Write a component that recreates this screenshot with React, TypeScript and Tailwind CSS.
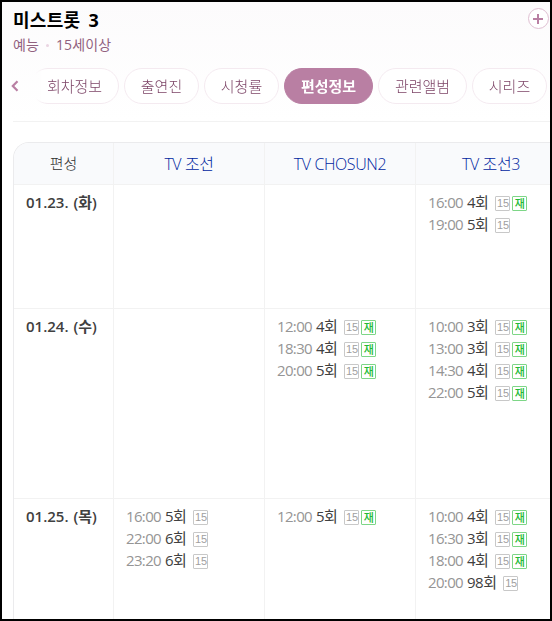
type Airing = { time: string; episode: string; rerun?: boolean }

const tabs = ["회차정보", "출연진", "시청률", "편성정보", "관련앨범", "시리즈"]

const channels = ["TV 조선", "TV CHOSUN2", "TV 조선3"]

const days: { date: string; height: string; cells: Airing[][] }[] = [
  {
    date: "01.23. (화)",
    height: "h-[124px]",
    cells: [
      [],
      [],
      [
        { time: "16:00", episode: "4회", rerun: true },
        { time: "19:00", episode: "5회" },
      ],
    ],
  },
  {
    date: "01.24. (수)",
    height: "h-[190px]",
    cells: [
      [],
      [
        { time: "12:00", episode: "4회", rerun: true },
        { time: "18:30", episode: "4회", rerun: true },
        { time: "20:00", episode: "5회", rerun: true },
      ],
      [
        { time: "10:00", episode: "3회", rerun: true },
        { time: "13:00", episode: "3회", rerun: true },
        { time: "14:30", episode: "4회", rerun: true },
        { time: "22:00", episode: "5회", rerun: true },
      ],
    ],
  },
  {
    date: "01.25. (목)",
    height: "h-[190px]",
    cells: [
      [
        { time: "16:00", episode: "5회" },
        { time: "22:00", episode: "6회" },
        { time: "23:20", episode: "6회" },
      ],
      [{ time: "12:00", episode: "5회", rerun: true }],
      [
        { time: "10:00", episode: "4회", rerun: true },
        { time: "16:30", episode: "3회", rerun: true },
        { time: "18:00", episode: "4회", rerun: true },
        { time: "20:00", episode: "98회" },
      ],
    ],
  },
]

function AiringRow({ time, episode, rerun }: Airing) {
  return (
    <li className="flex h-[22px] items-center text-[15px] leading-[22px]">
      <span className="w-[39px] shrink-0 tracking-[-0.65px] text-[#959595]">{time}</span>
      <span className="tracking-[-0.5px] text-[#404040]">{episode}</span>
      <span className="mt-[3px] ml-[7px] flex h-[15px] w-[15px] shrink-0 items-center justify-center rounded-[1px] border border-[#c8c8c8] font-['Liberation_Sans',sans-serif] text-[11px] leading-none tracking-[-0.3px] text-[#a0a0a0]">
        15
      </span>
      {rerun && (
        <span className="mt-[3px] ml-[2px] flex h-[15px] w-[15px] shrink-0 items-center justify-center rounded-[1px] border border-[#7dd687] pb-px text-[11px] leading-none font-medium text-[#22ba33]">
          재
        </span>
      )}
    </li>
  )
}

export default function App() {
  return (
    <div className="h-[621px] w-[552px] overflow-hidden border-2 border-black bg-white font-['Open_Sans','Noto_Sans_CJK_KR',sans-serif]">
      {/* Title and tabs */}
      <header className="h-[120px] bg-linear-to-b from-[#fcfbfc] to-white pl-[11px]">
        <div className="flex h-[64px] justify-between">
          <div className="pt-[6px]">
            <h1 className="h-[26px] text-[18px] leading-[25px] font-bold tracking-[0.3px] text-black [word-spacing:3px]">
              미스트롯 3
            </h1>
            <p className="flex h-[22px] items-center text-[14px] leading-[22px] tracking-[0.1px] text-[#91617f]">
              예능
              <span className="mx-[7px] h-[3px] w-[3px] rounded-full bg-[#ead5e2]" />
              15세이상
            </p>
          </div>
          <button className="mt-[6px] mr-[1px] h-[21px] w-[21px]" aria-label="추가">
            <svg width="21" height="21" viewBox="0 0 21 21" fill="none">
              <circle cx="10.5" cy="10.5" r="10" fill="#fff" stroke="#dfbfd2" />
              <path d="M10 6v10M5 11h10" stroke="#b97fa3" strokeWidth="2" />
            </svg>
          </button>
        </div>

        <nav className="flex h-[40px] items-start pt-[2px]">
          <button className="flex h-[36px] w-[17px] shrink-0 items-center" aria-label="이전">
            <svg width="8" height="12" viewBox="0 0 8 12" fill="none" className="-ml-[2px]">
              <path d="M6.5 1.2 1.8 6l4.7 4.8" stroke="#b97fa3" strokeWidth="2.2" />
            </svg>
          </button>
          <div className="flex shrink-0 gap-[5px] mask-[linear-gradient(to_right,transparent_0,transparent_5px,black_16px)]">
            {tabs.map((tab) => (
              <button
                key={tab}
                className={`flex h-[36px] shrink-0 items-center justify-center rounded-full border text-[15px] leading-none ${
                  tab.length === 4 ? "w-[89px]" : "w-[75px]"
                } ${
                  tab === "편성정보"
                    ? "border-[#b97fa3] bg-[#b97fa3] font-bold text-white"
                    : "border-[#f4eaf0] bg-white font-light text-[#7d4567]"
                }`}
              >
                {tab}
              </button>
            ))}
          </div>
        </nav>
      </header>

      <div className="ml-[11px]">
        <hr className="mt-[-1px] border-[#f2f2f2]" />

        {/* Broadcast schedule */}
        <div className="mt-[20px] w-[554px] overflow-hidden rounded-tl-[16px] border-t border-l border-[#ebebed]">
          <div className="grid h-[42px] grid-cols-[100px_151px_151px_151px] border-b border-[#f2f2f2] bg-[#f9fafc] text-[15px] font-light">
            <div className="flex items-center justify-center border-r border-[#f2f2f2] text-[#303030]">편성</div>
            {channels.map((channel) => (
              <div
                key={channel}
                className="flex items-center justify-center border-r border-[#f2f2f2] pt-px text-[16px] tracking-[-0.4px] text-[#0026a0]"
              >
                {channel}
              </div>
            ))}
          </div>

          {days.map((day) => (
            <div
              key={day.date}
              className={`grid grid-cols-[100px_151px_151px_151px] border-b border-[#f2f2f2] ${day.height}`}
            >
              <div className="border-r border-[#f2f2f2] pt-[6px] pl-[12px] text-[15px] leading-[22px] font-semibold text-[#404040] [word-spacing:1px]">
                {day.date}
              </div>
              {day.cells.map((airings, i) => (
                <ul key={i} className="border-r border-[#f2f2f2] pt-[6px] pl-[12px]">
                  {airings.map((airing) => (
                    <AiringRow key={airing.time} {...airing} />
                  ))}
                </ul>
              ))}
            </div>
          ))}
        </div>
      </div>
    </div>
  )
}
